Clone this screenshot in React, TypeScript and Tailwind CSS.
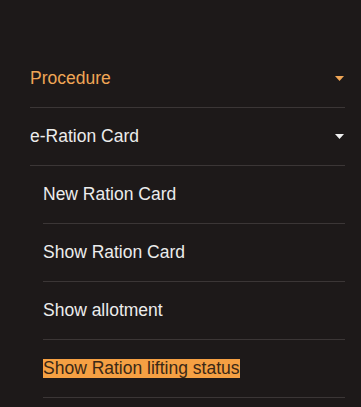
const subItems = ["New Ration Card", "Show Ration Card", "Show allotment"];

function Caret({ color }: { color: string }) {
  return (
    <svg width="9" height="5" viewBox="0 0 9 5" className="mr-[1px]">
      <path d="M0 0 L9 0 L4.5 5 Z" fill={color} />
    </svg>
  );
}

export default function App() {
  return (
    <div
      className="w-[361px] h-[407px] overflow-hidden bg-[#1d1919] pt-[50px] pl-[30px] pr-4 text-[17.5px]"
      style={{ fontFamily: '"Liberation Sans", Arial, sans-serif' }}
    >
      <div className="flex h-[58px] items-center justify-between border-b border-[#3b3636] pb-[1px]">
        <span className="text-[#f0a656]">Procedure</span>
        <Caret color="#f0a656" />
      </div>
      <div className="flex h-[58px] items-center justify-between border-b border-[#3b3636]">
        <span className="text-[#ececec]">e-Ration Card</span>
        <Caret color="#f0f0f0" />
      </div>
      <div className="pl-[13px]">
        {subItems.map((s) => (
          <div key={s} className="flex h-[58px] items-center border-b border-[#3b3636] text-[#ececec]">
            {s}
          </div>
        ))}
        <div className="flex h-[58px] items-center border-b border-[#3b3636]">
          <span className="bg-[#f5a043] leading-[19px] text-[#3a2816]">Show Ration lifting status</span>
        </div>
      </div>
    </div>
  );
}
